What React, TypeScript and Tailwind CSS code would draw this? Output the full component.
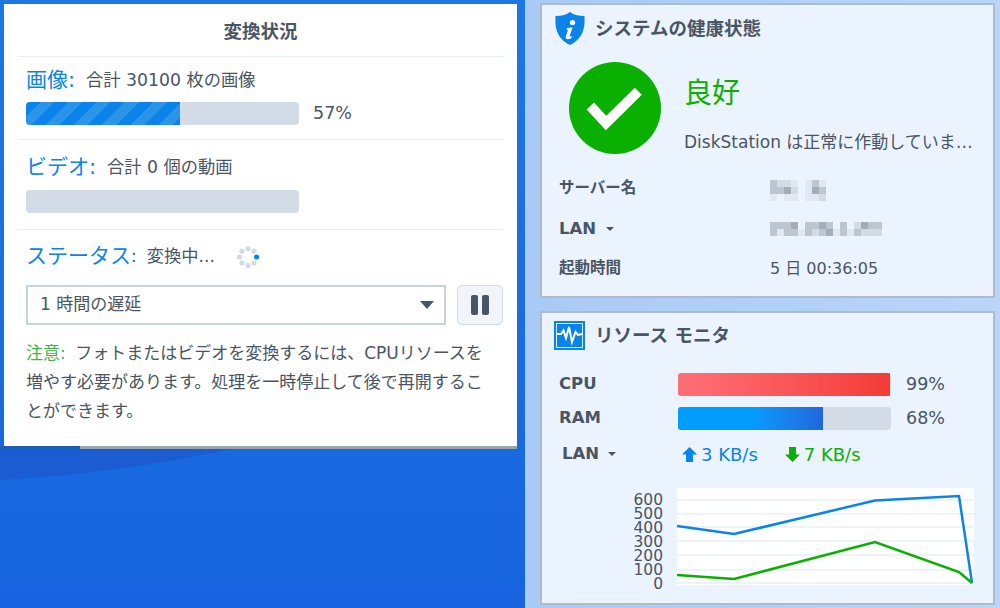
const font = { fontFamily: '"DejaVu Sans", "Noto Sans CJK JP", sans-serif' };

function Dots() {
  const pts = [0, 45, 90, 135, 180, 225, 270, 315];
  return (
    <svg width="26" height="26" viewBox="0 0 26 26" className="ml-[20px] shrink-0">
      {pts.map((a, i) => (
        <circle
          key={a}
          cx={13 + 8.5 * Math.cos((a * Math.PI) / 180)}
          cy={13 + 8.5 * Math.sin((a * Math.PI) / 180)}
          r="2.600"
          fill={i === 0 ? '#0a84eb' : '#d3dce6'}
        />
      ))}
    </svg>
  );
}

function Mosaic({ cols, cells }: { cols: number; cells: string[] }) {
  return (
    <svg width={cols * 7} height={(cells.length / cols) * 7} className="block">
      {cells.map((c, i) => (
        <rect key={i} x={(i % cols) * 7} y={Math.floor(i / cols) * 7} width="7" height="7" fill={c} />
      ))}
    </svg>
  );
}

const a = '#bcc5d0';
const b = '#a3acb8';
const c = '#d3dbe5';
const d = '#e1e8f2';
const e = '#ebf3fe';

function ShieldIcon() {
  return (
    <svg width="30" height="33" viewBox="0 0 30 33" className="shrink-0">
      <path d="M15 0 C19 3 24 4 29.500 4 C30 15 29 26 15 33 C1 26 0 15 0.500 4 C6 4 11 3 15 0 Z" fill="#0a84eb" />
      <circle cx="17.500" cy="10.500" r="2.600" fill="#fff" />
      <path d="M12 16 L17.500 15.500 L14.800 23.500 Q14.500 25 16.800 24 L16 26.500 Q10 28.500 10.800 24.500 L13 18 L11.600 18 Z" fill="#fff" />
    </svg>
  );
}

function MonitorIcon() {
  return (
    <svg width="31" height="29" viewBox="0 0 31 29" className="shrink-0">
      <rect width="31" height="29" fill="#0a84eb" />
      <rect x="2.500" y="2.500" width="26" height="24" fill="none" stroke="#d7ebfc" strokeWidth="1" />
      <polyline
        points="3,13 7,13 9.500,9.500 12,17 15,6 18,21 21.500,11 24,14 28,13"
        fill="none"
        stroke="#fff"
        strokeWidth="2"
      />
    </svg>
  );
}

function Chart() {
  return (
    <svg width="297" height="97" viewBox="0 0 297 97" className="block">
      <rect width="297" height="97" fill="#fff" />
      {[12, 26, 39, 53, 67, 82, 95].map((y) => (
        <line key={y} x1="0" x2="297" y1={y} y2={y} stroke="#e8eff8" strokeWidth="1.500" />
      ))}
      <polyline points="0,38 57,46 198,12.500 282,8 295,95" fill="none" stroke="#0a84eb" strokeWidth="2.500" />
      <polyline points="0,87 57,91 198,54 282,84 295,95" fill="none" stroke="#0ab000" strokeWidth="2.500" />
    </svg>
  );
}

function Caret({ className }: { className: string }) {
  return <span className={`inline-block border-x-transparent border-t-[#4a5563] ${className}`} />;
}

export default function App() {
  return (
    <div className="flex h-[608px] w-[1000px] overflow-hidden text-[#4a5563]" style={font}>
      <div className="relative flex h-full w-[525px] flex-col bg-gradient-to-b from-[#1c78e2] to-[#1864e0] pl-[4px] pt-[4px]">
        <svg width="240" height="40" className="absolute left-0 top-[449px]">
          <path d="M0 31 C70 27 150 18 230 0 L0 0 Z" fill="#1b5cd2" />
        </svg>
        <div className="relative h-[442px] w-[513px] bg-white px-[14px]">
          <div className="flex h-[53px] items-center justify-center border-b border-[#e6eef7] pt-[4px] text-[18.500px] font-bold">変換状況</div>

          <div className="h-[83px] border-b border-[#e6eef7] px-[8px]">
            <div className="flex h-[43px] items-center pt-[4px] text-[17.250px]">
              <span className="mr-[11px] text-[21px] text-[#0a84e6]">画像:</span>
              合計 30100 枚の画像
            </div>
            <div className="flex items-center">
              <div className="h-[23px] w-[273px] overflow-hidden rounded-[4px] bg-[#d3dce6]">
                <div className="h-full w-[154px] bg-[repeating-linear-gradient(135deg,#0a84eb_0,#0a84eb_10px,#2a95e8_10px,#2a95e8_20px)]" />
              </div>
              <span className="ml-[14px] text-[17.500px]">57%</span>
            </div>
          </div>

          <div className="h-[90px] border-b border-[#e6eef7] px-[8px]">
            <div className="flex h-[50px] items-center pt-[6px] text-[17.250px]">
              <span className="mr-[11px] text-[21px] text-[#0a84e6]">ビデオ:</span>
              合計 0 個の動画
            </div>
            <div className="h-[23px] w-[273px] rounded-[4px] bg-[#d3dce6]" />
          </div>

          <div className="pl-[8px]">
            <div className="flex h-[50px] items-center pt-[3px] text-[17.250px]">
              <span className="text-[21px] text-[#0a84e6]">ステータス</span>
              <span className="mr-[10px]">:</span>
              変換中...
              <Dots />
            </div>
            <div className="mt-[5px] flex gap-[11px]">
              <div className="flex h-[40px] w-[420px] items-center justify-between border-2 border-[#c8d3e0] pl-[12px] pr-[10px] text-[17px]">
                1 時間の遅延
                <Caret className="border-x-[7.500px] border-t-[8px]" />
              </div>
              <div className="flex h-[40px] w-[46px] items-center justify-center gap-[4px] rounded-[5px] border border-[#d0d9e4] bg-[#f1f5fa]">
                <span className="h-[20px] w-[7px] rounded-[2px] bg-[#4a5563]" />
                <span className="h-[20px] w-[7px] rounded-[2px] bg-[#4a5563]" />
              </div>
            </div>
            <p className="mt-[14px] w-[462px] text-[17px] leading-[29px]">
              <span className="mr-[4px] text-[#3cb54a]">注意:</span> フォトまたはビデオを変換するには、CPUリソースを増やす必要があります。処理を一時停止して後で再開することができます。
            </p>
          </div>
        </div>
        <div className="-ml-[4px] flex h-[3px] w-[517px]">
          <div className="w-[80px] bg-[#1a5fb4]" />
          <div className="flex-1 bg-[#98a4ae]" />
        </div>
      </div>

      <div className="flex h-full flex-1 flex-col gap-[13px] bg-gradient-to-r from-[#a9caf5] to-[#b9d6f9] pl-[15px] pr-[5px] pt-[3px]">
        <div className="h-[295px] border-2 border-[#adbccd] bg-[#ebf3fe] pl-[13px]">
          <div className="flex h-[47px] items-center gap-[10px]">
            <ShieldIcon />
            <span className="text-[18.500px] font-bold">システムの健康状態</span>
          </div>
          <div className="flex h-[102px] pl-[14px] pt-[10px]">
            <svg width="92" height="92" viewBox="0 0 92 92" className="shrink-0">
              <circle cx="46" cy="46" r="46" fill="#0ab000" />
              <polyline points="21.300,44 37,61 69.300,29.300" fill="none" stroke="#fff" strokeWidth="10" />
            </svg>
            <div className="ml-[23px] min-w-0">
              <div className="mt-[12px] text-[28px] leading-[40px] text-[#0ab000]">良好</div>
              <div className="mt-[16px] w-[291px] truncate text-[17px] leading-[24px]">DiskStation は正常に作動しています。</div>
            </div>
          </div>
          <div className="mt-[15px] grid grid-cols-[211px_1fr] pl-[4px] text-[15.500px] font-bold">
            <div className="flex h-[40px] items-center">サーバー名</div>
            <div className="flex h-[40px] items-center pt-[3px]">
              <Mosaic cols={8} cells={[a, c, c, d, e, d, a, d, a, a, b, c, e, d, b, a, d, e, d, d, e, d, d, c]} />
            </div>
            <div className="flex h-[40px] items-center gap-[10px] text-[16.500px]">
              LAN
              <Caret className="border-x-[4px] border-t-[4px]" />
            </div>
            <div className="flex h-[40px] items-center">
              <Mosaic cols={16} cells={[a, a, a, b, e, a, a, b, a, e, a, e, c, b, a, a, a, d, a, a, d, a, c, a, b, d, a, d, a, c, c, c]} />
            </div>
            <div className="flex h-[40px] items-center">起動時間</div>
            <div className="flex h-[40px] items-center text-[16px] font-normal">5 日 00:36:05</div>
          </div>
        </div>

        <div className="h-[294px] border-2 border-[#adbccd] bg-[#ebf3fe] pl-[12px]">
          <div className="flex h-[45px] items-center gap-[10px]">
            <MonitorIcon />
            <span className="text-[18.500px] font-bold">リソース モニタ</span>
          </div>
          <div className="mt-[15px] flex flex-col gap-[11px] pl-[5px]">
            <div className="flex h-[23px] items-center">
              <span className="w-[119px] text-[16.500px] font-bold">CPU</span>
              <div className="h-[23px] w-[213px] overflow-hidden rounded-[3px] bg-[#d3dce6]">
                <div className="h-full w-[212px] bg-gradient-to-r from-[#ff6f77] to-[#f33a36]" />
              </div>
              <span className="ml-[15px] text-[17.500px]">99%</span>
            </div>
            <div className="flex h-[23px] items-center">
              <span className="w-[119px] text-[16.500px] font-bold">RAM</span>
              <div className="h-[23px] w-[213px] overflow-hidden rounded-[3px] bg-[#d3dce6]">
                <div className="h-full w-[145px] bg-gradient-to-r from-[#009dff] via-[#009dff] to-[#2166dd]" />
              </div>
              <span className="ml-[15px] text-[17.500px]">68%</span>
            </div>
          </div>
          <div className="mt-[10px] flex h-[28px] items-center pl-[8px]">
            <div className="flex w-[120px] items-center gap-[9px] text-[16.500px] font-bold">
              LAN
              <Caret className="border-x-[4px] border-t-[4px]" />
            </div>
            <svg width="15" height="15" viewBox="0 0 15 15" className="shrink-0">
              <path d="M7.500 0 L15 7.500 L11 7.500 L11 15 L4 15 L4 7.500 L0 7.500 Z" fill="#0a84eb" />
            </svg>
            <span className="ml-[4px] text-[18px] text-[#0a84eb]">3 KB/s</span>
            <svg width="15" height="15" viewBox="0 0 15 15" className="ml-[27px] shrink-0">
              <path d="M7.500 15 L15 7.500 L11 7.500 L11 0 L4 0 L4 7.500 L0 7.500 Z" fill="#0ab000" />
            </svg>
            <span className="ml-[4px] text-[18px] text-[#0ab000]">7 KB/s</span>
          </div>
          <div className="mt-[20px] flex items-start">
            <div className="flex w-[109px] flex-col items-end pt-[5px] text-[15.500px] leading-[14px]">
              {[600, 500, 400, 300, 200, 100, 0].map((n) => (
                <span key={n}>{n}</span>
              ))}
            </div>
            <div className="ml-[14px]">
              <Chart />
            </div>
          </div>
        </div>
      </div>
    </div>
  );
}
